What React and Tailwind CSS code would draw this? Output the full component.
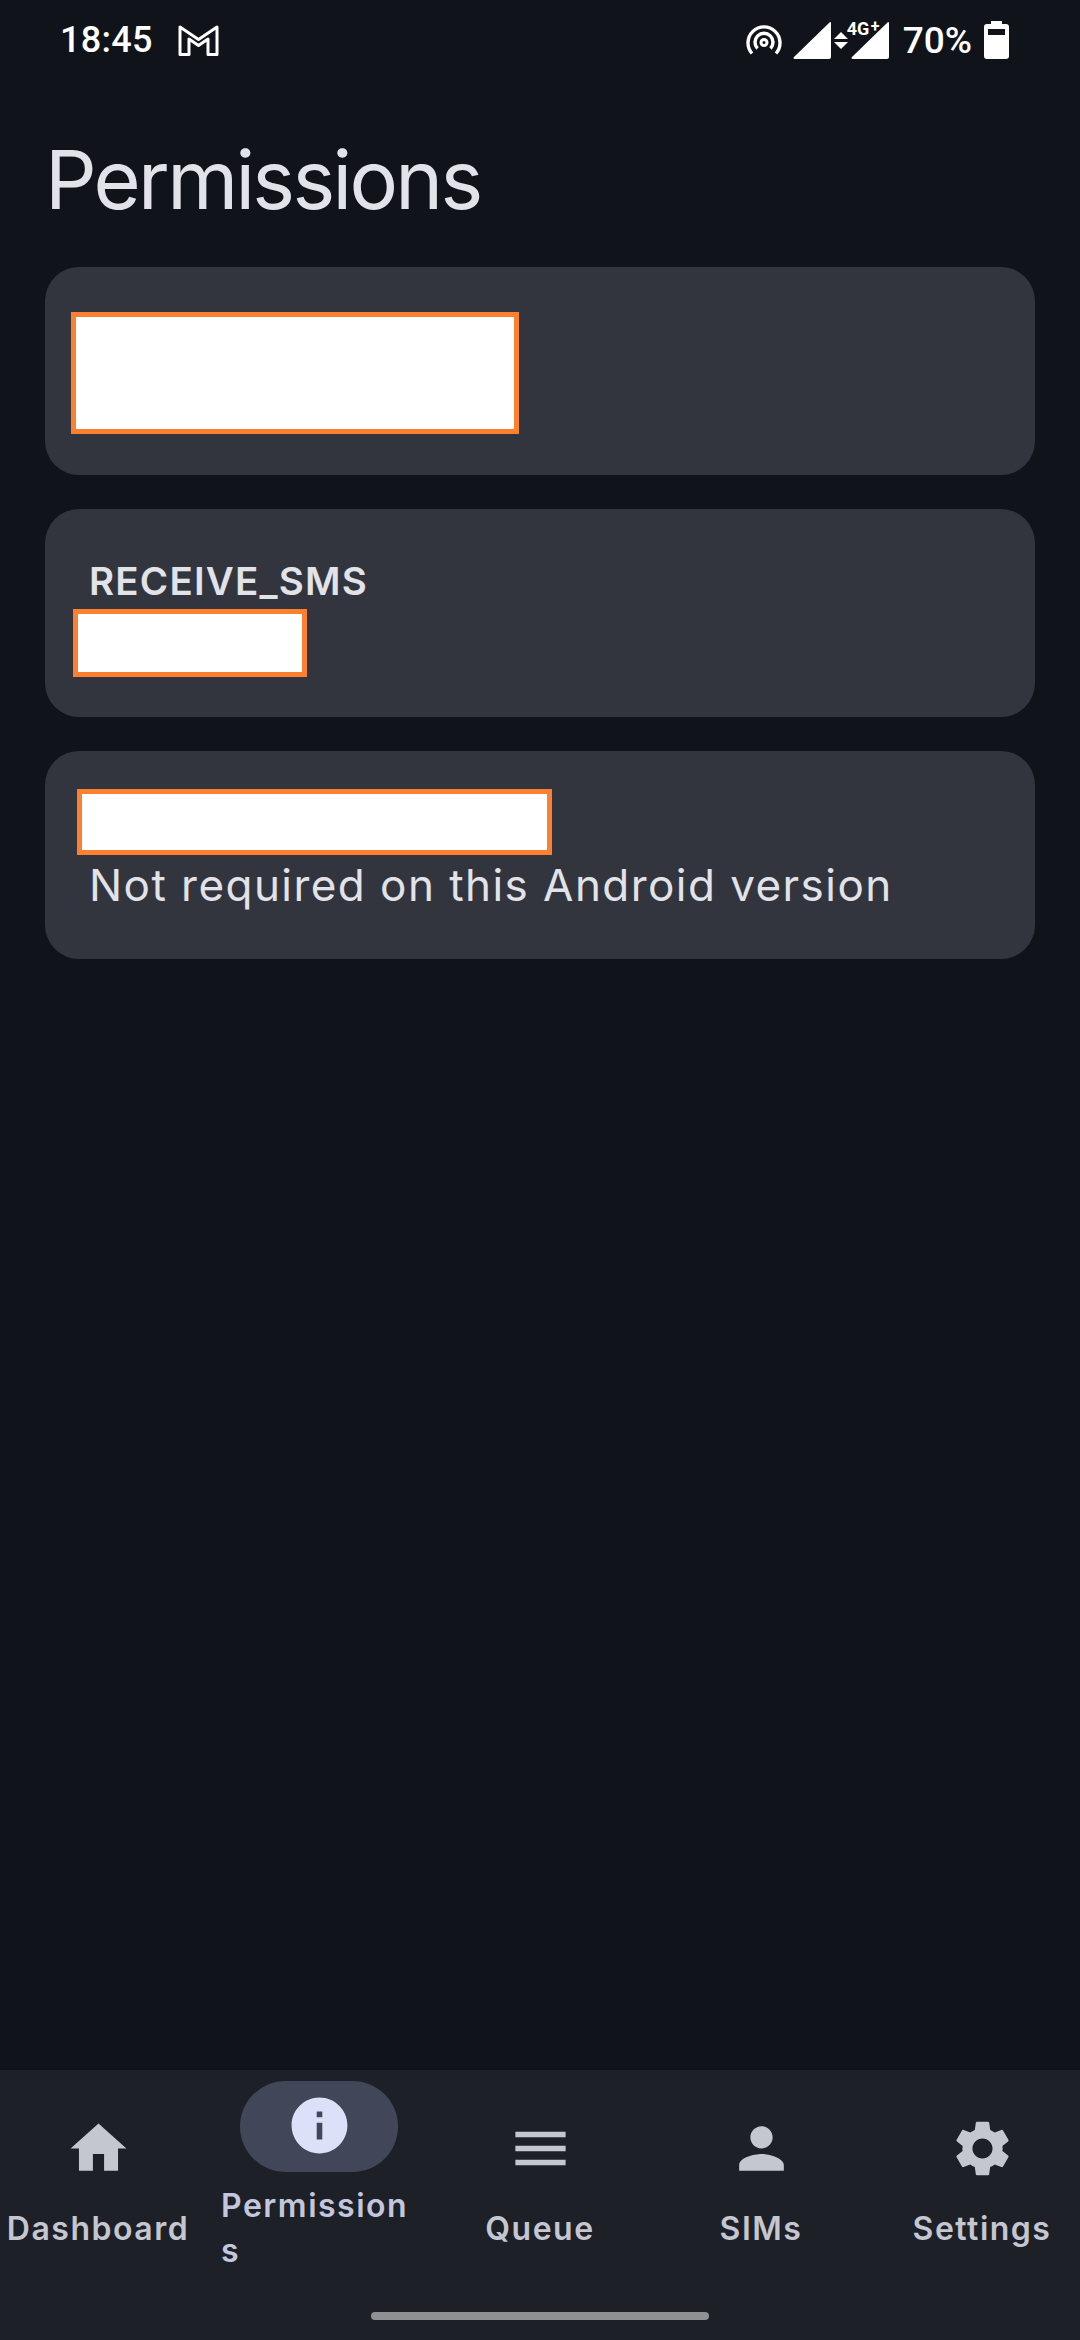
import React from 'react';

const navItems = [
  { label: 'Dashboard', path: 'M10 20v-6h4v6h5v-8h3L12 3 2 12h3v8z' },
  { label: 'Permissions', active: true, path: 'M12 2C6.48 2 2 6.48 2 12s4.48 10 10 10 10-4.48 10-10S17.52 2 12 2zm1 15h-2v-6h2v6zm0-8h-2V7h2v2z' },
  { label: 'Queue', path: 'M3 18h18v-2H3v2zm0-5h18v-2H3v2zm0-7v2h18V6H3z' },
  { label: 'SIMs', path: 'M12 12c2.21 0 4-1.79 4-4s-1.79-4-4-4-4 1.79-4 4 1.79 4 4 4zm0 2c-2.67 0-8 1.34-8 4v2h16v-2c0-2.66-5.33-4-8-4z' },
  { label: 'Settings', path: 'M19.14 12.94c.04-.3.06-.61.06-.94 0-.32-.02-.64-.07-.94l2.03-1.58c.18-.14.23-.41.12-.61l-1.92-3.32c-.12-.22-.37-.29-.59-.22l-2.39.96c-.5-.38-1.03-.7-1.62-.94l-.36-2.54c-.04-.24-.24-.41-.48-.41h-3.84c-.24 0-.43.17-.47.41l-.36 2.54c-.59.24-1.13.57-1.62.94l-2.39-.96c-.22-.08-.47 0-.59.22L2.74 8.87c-.12.21-.08.47.12.61l2.03 1.58c-.05.3-.09.63-.09.94s.02.64.07.94l-2.03 1.58c-.18.14-.23.41-.12.61l1.92 3.32c.12.22.37.29.59.22l2.39-.96c.5.38 1.03.7 1.62.94l.36 2.54c.05.24.24.41.48.41h3.84c.24 0 .44-.17.47-.41l.36-2.54c.59-.24 1.13-.56 1.62-.94l2.39.96c.22.08.47 0 .59-.22l1.92-3.32c.12-.22.07-.47-.12-.61l-2.01-1.58zM12 15.6c-1.98 0-3.6-1.62-3.6-3.6s1.62-3.6 3.6-3.6 3.6 1.62 3.6 3.6-1.62 3.6-3.6 3.6z' },
];

// 상태바 아이콘
const GmailIcon = () => (
  <svg width="41" height="31" viewBox="0 0 41 31" className="ml-[25px]">
    <path d="M2 2 L20.5 14.5 L39 2 V29.5 H30 V14 L20.5 20.5 L11 14 V29.5 H2 Z" fill="none" stroke="white" strokeWidth="3" strokeLinejoin="round" />
  </svg>
);

const HotspotIcon = () => (
  <svg width="36" height="30" viewBox="0 0 36 30" fill="none" stroke="white" strokeWidth="3.4">
    <path d="M6 28.5 A16 16 0 1 1 30 28.5" />
    <path d="M11.5 23.5 A9 9 0 1 1 24.5 23.5" />
    <circle cx="18" cy="17.5" r="3" strokeWidth="3" />
  </svg>
);

const SignalIcon = () => (
  <svg width="38" height="37" viewBox="0 0 38 37" fill="white">
    <path d="M37 0 a1 1 0 0 1 1 1 V35 a2 2 0 0 1-2 2 H2 c-1.5 0-2-1-1-2 Z" />
  </svg>
);

const BatteryIcon = () => (
  <svg width="25" height="38" viewBox="0 0 25 38" fill="white">
    <path fillRule="evenodd" d="M7 0 H18 V3 H22 a3 3 0 0 1 3 3 V35 a3 3 0 0 1-3 3 H3 a3 3 0 0 1-3-3 V6 a3 3 0 0 1 3-3 H7 Z M4 8 V14 H21 V8 Z" />
  </svg>
);

const StatusBar = () => (
  <div className="flex h-[80px] items-center justify-between pl-[60px] pr-[71px] text-white font-['Roboto',sans-serif]">
    <div className="flex items-center">
      <span className="text-[36px] font-medium leading-none tracking-[0.3px]">18:45</span>
      <GmailIcon />
    </div>
    <div className="flex items-center">
      <HotspotIcon />
      <div className="ml-[11px]"><SignalIcon /></div>
      <div className="mx-[3px] flex flex-col gap-[3px]">
        <div className="h-0 w-0 border-x-[7px] border-b-[7px] border-x-transparent border-b-white" />
        <div className="h-0 w-0 border-x-[7px] border-t-[7px] border-x-transparent border-t-white" />
      </div>
      <div className="relative">
        <SignalIcon />
        <span className="absolute left-[-4px] top-[-3px] text-[18px] font-bold leading-[20px]">4G</span>
        <span className="absolute left-[20px] top-[-5px] text-[16px] font-bold leading-[20px]">+</span>
      </div>
      <span className="ml-[14px] text-[37px] font-medium leading-none">70%</span>
      <div className="ml-[12px]"><BatteryIcon /></div>
    </div>
  </div>
);

const Redacted = ({ className }) => (
  <div className={`border-[5px] border-[#fb8130] bg-white ${className}`} />
);

const Card = ({ children, className }) => (
  <div className={`h-[208px] rounded-[34px] bg-[#33353e] ${className}`}>{children}</div>
);

const NavItem = ({ item }) => (
  <div className="flex flex-col items-center">
    <div className={`flex h-[91px] w-[158px] items-center justify-center rounded-full ${item.active ? 'bg-[#414659]' : ''}`}>
      <svg width="67" height="67" viewBox="0 0 24 24" className="mb-[2px]" fill={item.active ? '#dce1f9' : '#c4c6d0'}>
        <path d={item.path} />
      </svg>
    </div>
    <div className={`mt-[11px] text-[32px] font-semibold leading-[45px] tracking-[1.5px] ${item.active ? 'w-full text-left break-all text-[#c2c7de]' : 'text-[#c4c6d0]'}`}>
      {item.label}
    </div>
  </div>
);

export default function App() {
  return (
    <div className="flex h-[2340px] w-[1080px] flex-col overflow-hidden bg-[#10131a] font-['Inter',sans-serif]">
      <StatusBar />
      <main className="flex-1 px-[45px]">
        <h1 className="mt-[48px] text-[81px] font-normal leading-[105px] tracking-[-2.7px] text-[#e2e2e9]">Permissions</h1>
        <div className="mt-[34px] flex flex-col gap-[34px]">
          <Card className="pl-[26px] pt-[45px]">
            <Redacted className="h-[122px] w-[448px]" />
          </Card>
          <Card className="pl-[44px] pt-[44px]">
            <div className="text-[38.5px] font-semibold leading-[56px] tracking-[1.2px] text-[#e2e2e9]">RECEIVE_SMS</div>
            <Redacted className="-ml-[16px] h-[68px] w-[234px]" />
          </Card>
          <Card className="pl-[44px] pt-[38px]">
            <Redacted className="-ml-[12px] h-[66px] w-[475px]" />
            <div className="text-[44px] leading-[61px] tracking-[1.45px] text-[#e2e2e9]">Not required on this Android version</div>
          </Card>
        </div>
      </main>
      <nav className="flex flex-col bg-[#1d2027] pb-[20px]">
        <div className="grid h-[214px] grid-cols-5 items-center gap-x-[25px]">
          {navItems.map((item) => (
            <NavItem key={item.label} item={item} />
          ))}
        </div>
        <div className="mx-auto mt-[28px] h-[8px] w-[338px] rounded-full bg-[#8f9092]" />
      </nav>
    </div>
  );
}
